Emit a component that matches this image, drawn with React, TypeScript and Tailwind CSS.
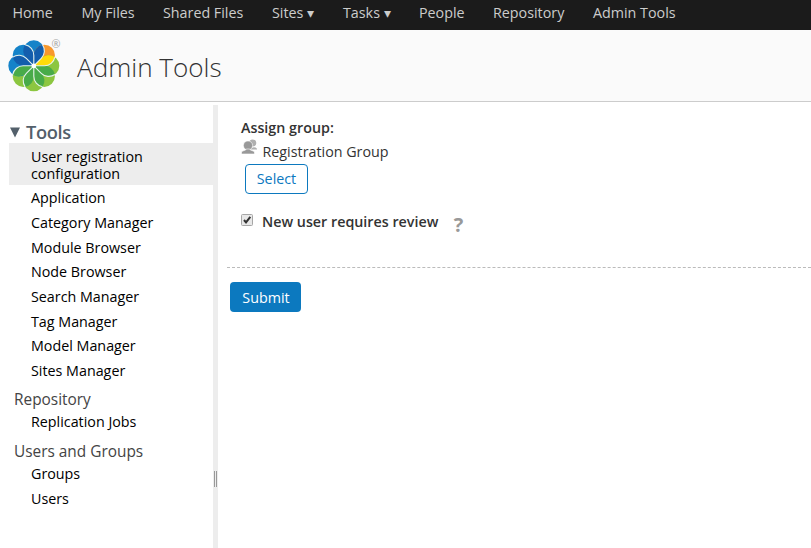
import React from "react";

const petals = [
  { light: "#1583c9", dark: "#135ead" },
  { light: "#f8982c", dark: "#fedb0a" },
  { light: "#8cc640", dark: "#48ab49" },
  { light: "#8cc640", dark: "#48ab49" },
  { light: "#8cc640", dark: "#48ab49" },
  { light: "#8cc640", dark: "#48ab49" },
  { light: "#1583c9", dark: "#135ead" },
  { light: "#1583c9", dark: "#135ead" },
];

function Logo() {
  return (
    <svg width="56" height="56" viewBox="-28.3 -28.3 57 57" className="block shrink-0 overflow-visible">
      {petals.map((p, i) => (
        <path key={i} d="M0 0L7.6 -7.6A10.75 10.75 0 1 0 -7.6 -7.6Z" fill={p.light} transform={`rotate(${i * 45})`} />
      ))}
      {petals.map((p, i) => (
        <path key={i} d="M0 0L7.6 -7.6A10.75 10.75 0 0 0 8.85 -21.4A10.75 10.75 0 0 0 0 -10.75Z" fill={p.dark} transform={`rotate(${i * 45})`} />
      ))}
      {petals.map((p, i) => (
        <path key={i} d="M0 0L7.6 -7.6A10.75 10.75 0 0 0 8.85 -21.4" fill="none" stroke="#e6f3ee" strokeWidth="1.1" transform={`rotate(${i * 45})`} />
      ))}
      <circle r="2.4" fill="#fff" />
      <text x="22.5" y="-18.5" fontSize="11" fill="#a5a5a5" textAnchor="middle" fontFamily="Open Sans">®</text>
    </svg>
  );
}

const nav = [
  { t: "Home", w: "w-[69.1px]" },
  { t: "My Files", w: "w-[81.5px]" },
  { t: "Shared Files", w: "w-[109px]" },
  { t: "Sites ▾", w: "w-[71px]" },
  { t: "Tasks ▾", w: "w-[76px]" },
  { t: "People", w: "w-[74px]" },
  { t: "Repository", w: "w-[100px]" },
  { t: "Admin Tools", w: "w-[100px]" },
];

const tools = ["Application", "Category Manager", "Module Browser", "Node Browser", "Search Manager", "Tag Manager", "Model Manager", "Sites Manager"];

function Item({ children }: { children: React.ReactNode }) {
  return <li className="h-[24.67px] pl-[22px] leading-[26px]">{children}</li>;
}

export default function App() {
  return (
    <div className="flex h-[548px] w-[811px] flex-col overflow-hidden bg-white font-['Open_Sans',sans-serif] text-[14.3px] text-black">
      <nav className="flex h-[30px] shrink-0 bg-[#1b1b1b] pl-[12.4px] leading-[26px] text-[#ccc]">
        {nav.map((n) => (
          <a key={n.t} className={`${n.w} shrink-0 whitespace-nowrap`}>{n.t}</a>
        ))}
      </nav>
      <header className="flex h-[72px] shrink-0 items-center border-b border-[#ccc] bg-[#fafafa] pl-[6px]">
        <Logo />
        <h1 className="ml-[15px] pb-[1px] pt-[4px] text-[26.1px] font-light leading-[34px] text-[#333]">Admin Tools</h1>
      </header>
      <div className="flex flex-1 pt-[3px]">
        <aside className="w-[213px] shrink-0 pl-[9px] pt-[15px]">
          <h2 className="flex h-[23px] items-start text-[18.3px] font-semibold leading-[23px] tracking-[-0.4px] text-[#53606b]">
            <svg width="12" height="11" className="mr-[5px] mt-[7px]"><path d="M1 0.5H11L6 10.5Z" fill="#53606b" /></svg>
            Tools
          </h2>
          <ul>
            <li className="h-[42.25px] bg-[#ededed] pl-[22px] pt-[5px] leading-[17px]">User registration<br />configuration</li>
            {tools.map((t) => <Item key={t}>{t}</Item>)}
          </ul>
          <h3 className="mt-[4.4px] h-[22px] pl-[5px] text-[15.4px] leading-[25px] text-[#444]">Repository</h3>
          <ul><Item>Replication Jobs</Item></ul>
          <h3 className="mt-[5.6px] h-[22px] pl-[5px] text-[15.4px] leading-[25px] text-[#444]">Users and Groups</h3>
          <ul><Item>Groups</Item><Item>Users</Item></ul>
        </aside>
        <div className="w-[5px] shrink-0 bg-[#ededed] pl-[1px] pt-[366px]">
          <div className="h-[16px] w-[3px] border-x border-[#999]" />
        </div>
        <main className="min-w-0 flex-1 pl-[9px] text-[#333]">
          <section className="flex h-[163px] flex-col border-b border-dashed border-[#bbb] pl-[14px] pt-[12px]">
            <div className="h-[22px] font-semibold leading-[22px]">Assign group:</div>
            <div className="flex h-[25px]">
              <svg width="17" height="17" viewBox="0 0 17 17" className="mr-[4.5px]">
                <g fill="#b0b0b0"><circle cx="11.7" cy="4" r="3.6" /><path d="M9 10.5C10 8 15 7 16 10V10.5Z" /></g>
                <g fill="#999" stroke="#fff" strokeWidth="0.6"><circle cx="7" cy="6.5" r="4.6" /><path d="M0.5 15V13C2 11 5 12 5.2 10H8.8C9 12 12 11 13.5 13V15Z" /></g>
              </svg>
              <span className="leading-[25px]">Registration Group</span>
            </div>
            <button className="ml-[4px] h-[30px] w-[63px] shrink-0 rounded-[4px] border border-[#0c79bf] bg-white leading-[28px] text-[#0c79bf]">Select</button>
            <div className="mt-[15px] flex h-[27px] font-semibold">
              <svg width="12" height="12" viewBox="0 0 12 12" className="mr-[9px] mt-[5px]">
                <rect x="0.5" y="0.5" width="11" height="11" rx="1" fill="#e8e8e8" stroke="#a6a6a6" />
                <path d="M3 6L5 8.4L9.3 2.8" fill="none" stroke="#333" strokeWidth="2" />
              </svg>
              <span className="leading-[26px]">New user requires review</span>
              <span className="ml-[15.5px] text-[20px] font-bold leading-[31px] text-[#999]">?</span>
            </div>
          </section>
          <button className="ml-[3px] mt-[14px] h-[30px] w-[71px] rounded-[4px] bg-[#0c79bf] pl-px leading-[32px] text-white">Submit</button>
        </main>
      </div>
    </div>
  );
}
